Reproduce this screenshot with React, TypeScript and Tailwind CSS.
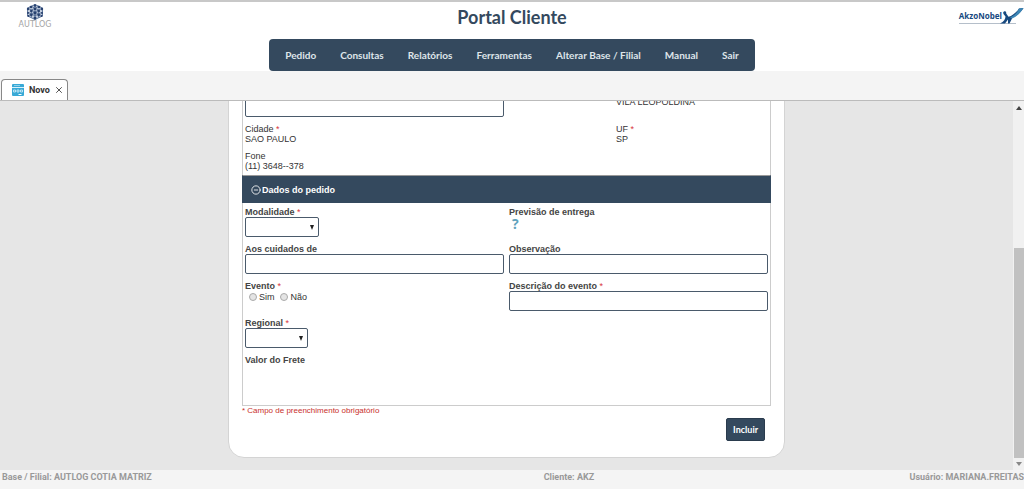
import type { ReactNode } from "react";
import { CircleMinus, X } from "lucide-react";

const menu = ["Pedido", "Consultas", "Relatórios", "Ferramentas", "Alterar Base / Filial", "Manual", "Sair"];

const inputClass = "block w-full h-5 px-1 rounded-xs border border-[#4a5a6b] bg-white outline-none";

function Required() {
  return <span className="text-[#d9363e] font-normal"> *</span>;
}

function Field({ label, id, required, children }: { label: string; id?: string; required?: boolean; children?: ReactNode }) {
  return (
    <div className="min-h-[30px]">
      <label htmlFor={id} className="block font-bold text-[#444]">
        {label}
        {required && <Required />}
      </label>
      {children}
    </div>
  );
}

function Info({ label, value, required }: { label: string; value: string; required?: boolean }) {
  return (
    <div>
      <div>
        {label}
        {required && <Required />}
      </div>
      <div>{value}</div>
    </div>
  );
}

function Select({ id, className }: { id: string; className: string }) {
  return (
    <div className={"relative " + className}>
      <select id={id} className={inputClass + " appearance-none"}>
        <option value=""></option>
      </select>
      <svg viewBox="0 0 4 5" className="absolute right-[5px] top-2 w-1 h-[5px] pointer-events-none">
        <path d="M0 0H4L2 5Z" fill="#222" />
      </svg>
    </div>
  );
}

function AutlogLogo() {
  return (
    <div className="flex flex-col items-center w-10">
      <svg viewBox="0 0 18 16" className="w-[18px] h-4">
        <path d="M9 0.5L16.5 4V12L9 15.5L1.5 12V4Z" fill="#c3cede" />
        <path d="M9 0.5L16.5 4V12L9 15.5L1.5 12V4ZM1.5 4L9 8L16.5 4M9 8V15.5M5 2.2L12.7 6V13.7M13 2.2L5.3 6V13.7M1.5 8L9 11.8L16.5 8M1.5 12L9 8L16.5 12M9 0.5V8" fill="none" stroke="#46618c" strokeWidth="0.8" />
        <g fill="#27416f">
          <circle cx="9" cy="1.5" r="1.3" />
          <circle cx="5" cy="3" r="1.3" />
          <circle cx="13" cy="3" r="1.3" />
          <circle cx="2" cy="5" r="1.2" />
          <circle cx="16" cy="5" r="1.2" />
          <circle cx="9" cy="5" r="1.3" />
          <circle cx="5.3" cy="7" r="1.3" />
          <circle cx="12.7" cy="7" r="1.3" />
          <circle cx="9" cy="9" r="1.5" />
          <circle cx="2" cy="9" r="1" />
          <circle cx="16" cy="9" r="1" />
          <circle cx="5.3" cy="11" r="1.3" />
          <circle cx="12.7" cy="11" r="1.3" />
          <circle cx="2.5" cy="12" r="1" />
          <circle cx="15.5" cy="12" r="1" />
          <circle cx="9" cy="14" r="1.5" />
        </g>
      </svg>
      <span className="mt-px font-['DejaVu_Sans',sans-serif] text-[8px] leading-[8px] text-[#a5a5a5]">AUTLOG</span>
    </div>
  );
}

function AkzoLogo() {
  return (
    <div className="flex items-start">
      <span className="pb-px font-['Noto_Sans',sans-serif] font-bold text-[8px] leading-3 text-[#17497f] border-b border-[#b5bfca]">AkzoNobel</span>
      <svg viewBox="0 0 24 17" className="w-6 h-[17px] -ml-[2px] -mt-[3px]">
        <path d="M0 16.5H16" stroke="#b5bfca" />
        <path d="M4 4.500C5.500 4 6.500 5 6.200 6.500L8.500 9.800C12 8.800 16.500 5.500 19 1.500L23.500 1C21.500 4.500 16.500 9.500 12.500 10.500L9.500 16.500H8L8 12.500L5 16.500H0C4 14.500 5.500 12 5.500 9.500L3.500 7C3 6 3 5 4 4.500Z" fill="#17497f" />
        <path d="M10 10.500C14 9 17.500 5.500 19 1.500L23.500 1C20.500 6 16.500 9.800 12 11.500Z" fill="#3d86b5" />
      </svg>
    </div>
  );
}

function Header() {
  return (
    <header className="relative bg-white border-t-2 border-[#c8c8c8] h-[71px] flex flex-col items-center">
      <div className="absolute left-[15px] top-[2px]">
        <AutlogLogo />
      </div>
      <h1 className="mt-[3px] font-['Lato',sans-serif] font-bold text-[18px] leading-6 text-[#34495e]">Portal Cliente</h1>
      <div className="absolute right-0 top-2">
        <AkzoLogo />
      </div>
      <nav className="mt-auto h-8 px-4 flex items-center gap-6 rounded-sm bg-[#34495e] font-['Lato',sans-serif] font-bold text-[10px] text-[#dfe5ea]">
        {menu.map((m) => (
          <a key={m} href="#">{m}</a>
        ))}
      </nav>
    </header>
  );
}

function Tabs() {
  return (
    <div className="flex items-end h-[30px] pl-px bg-[#f4f4f4] border-b border-[#bbb]">
      <div className="flex items-center h-[21px] w-[67px] pl-[10px] rounded-t-sm border border-b-0 border-[#888] bg-white">
        <svg viewBox="0 0 12 12" className="w-3 h-3 shrink-0">
          <rect width="12" height="12" rx="1" fill="#38a9d6" />
          <path d="M0 3.500H12" stroke="#d9f0fa" />
          <path d="M2 1.500H8" stroke="#8fd0ea" />
          <path d="M1.500 6H3.500V8H1.500ZM5 6H7V8H5ZM8.500 6H10.500V8H8.500Z" fill="none" stroke="#d9f0fa" strokeWidth="0.8" />
          <path d="M6.500 10.500H9.500" stroke="#fff" />
        </svg>
        <span className="ml-[5px] font-['Roboto',sans-serif] font-bold text-[#333]">Novo</span>
        <button type="button" aria-label="Fechar" className="ml-1">
          <X size={10} strokeWidth={2} color="#333" />
        </button>
      </div>
    </div>
  );
}

function OrderForm() {
  return (
    <form className="w-[55%] min-w-[557px] mx-auto mb-3 px-[13px] pt-5 pb-4 shrink-0 bg-white border border-[#d4d4d4] rounded-2xl">
      <section className="border-x border-[#ccc] px-[2px] pb-1 grid grid-cols-[371fr_152fr] gap-y-[7px] text-[#333]">
        <div className="pr-[112px]">
          <input aria-label="Endereço" className={inputClass} />
        </div>
        <div>VILA LEOPOLDINA</div>
        <Info label="Cidade" value="SAO PAULO" required />
        <Info label="UF" value="SP" required />
        <Info label="Fone" value="(11) 3648--378" />
      </section>

      <h2 className="flex items-center gap-px h-7 pl-2 border-t border-x border-t-[#999] border-x-[#34495e] bg-[#34495e] font-bold text-white">
        <CircleMinus size={10} strokeWidth={2} />
        Dados do pedido
      </h2>
      <section className="border border-t-0 border-[#ccc] px-[2px] pt-1 min-h-[203px] grid grid-cols-2 content-start gap-x-[5px] gap-y-[7px]">
        <Field label="Modalidade" id="modalidade" required>
          <Select id="modalidade" className="w-[74px]" />
        </Field>
        <Field label="Previsão de entrega">
          <button type="button" className="block ml-[3px] font-['Open_Sans',sans-serif] font-bold text-[14px] leading-[14px] text-[#5fa3bd]">?</button>
        </Field>
        <Field label="Aos cuidados de" id="cuidados">
          <input id="cuidados" className={inputClass} />
        </Field>
        <Field label="Observação" id="obs">
          <input id="obs" className={inputClass} />
        </Field>
        <Field label="Evento" required>
          <div className="flex items-center gap-[6px] pl-1 pt-px text-[#333]">
            {["Sim", "Não"].map((o) => (
              <label key={o} className="flex items-center gap-[2px]">
                <input type="radio" name="evento" className="appearance-none w-2 h-2 rounded-full border border-[#aaa] bg-[#e4e4e4]" />
                {o}
              </label>
            ))}
          </div>
        </Field>
        <Field label="Descrição do evento" id="descricao" required>
          <input id="descricao" className={inputClass} />
        </Field>
        <div className="col-span-2">
          <Field label="Regional" id="regional" required>
            <Select id="regional" className="w-[63px]" />
          </Field>
        </div>
        <Field label="Valor do Frete" />
      </section>

      <p className="text-[8px] text-[#c9302c]">* Campo de preenchimento obrigatório</p>
      <div className="flex justify-end pt-[2px] pr-[6px]">
        <button type="button" className="h-[23px] px-[6px] rounded-xs bg-[#34495e] border border-[#2a3b4d] font-['Lato',sans-serif] font-bold text-[9px] text-white">Incluir</button>
      </div>
    </form>
  );
}

function Scrollbar() {
  return (
    <div className="w-[11px] shrink-0 flex flex-col items-center bg-[#f1f1f1]">
      <svg viewBox="0 0 6 4" className="mt-[5px] w-[6px] h-1">
        <path d="M0 4L3 0L6 4Z" fill="#444" />
      </svg>
      <div className="mt-auto h-[57%] w-full pl-px">
        <div className="h-full bg-[#c1c1c1]" />
      </div>
      <svg viewBox="0 0 6 4" className="my-1 w-[6px] h-1 shrink-0">
        <path d="M0 0L3 4L6 0Z" fill="#888" />
      </svg>
    </div>
  );
}

export default function App() {
  return (
    <div className="h-screen flex flex-col overflow-hidden font-['Liberation_Sans',Arial,sans-serif] text-[9px] leading-[10px]">
      <Header />
      <Tabs />
      <main className="flex-1 min-h-0 flex bg-[#e6e6e6]">
        <div className="flex-1 flex flex-col justify-end overflow-hidden">
          <OrderForm />
        </div>
        <Scrollbar />
      </main>
      <footer className="flex h-[19px] pt-[2px] pl-[2px] bg-[#f4f4f4] font-['Roboto',sans-serif] font-bold text-[#999] whitespace-nowrap">
        <span className="w-[53%]">Base / Filial: AUTLOG COTIA MATRIZ</span>
        <span>Cliente: AKZ</span>
        <span className="ml-auto">Usuário: MARIANA.FREITAS</span>
      </footer>
    </div>
  );
}
